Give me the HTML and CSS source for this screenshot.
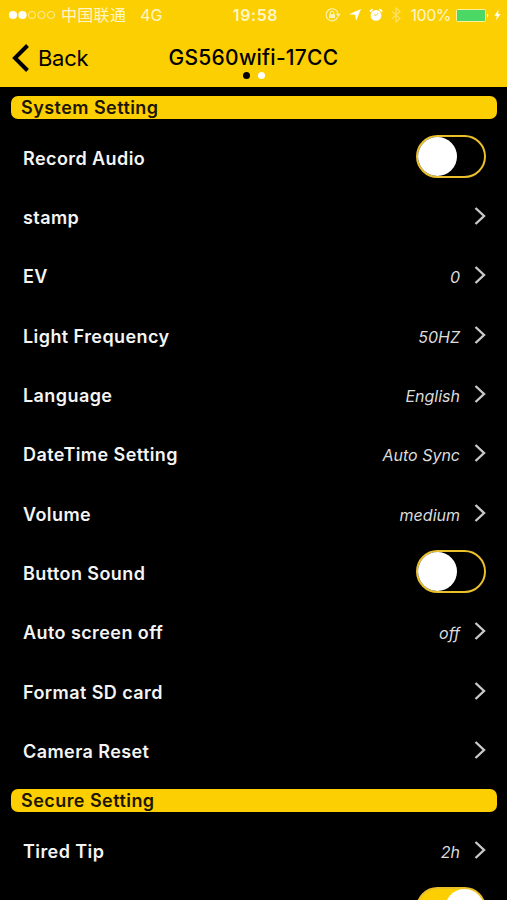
FILE: index.html
```html
<!DOCTYPE html>
<html lang="en">
<head>
    <meta charset="UTF-8">
    <meta name="viewport" content="width=device-width, initial-scale=1.0">
    <title>GS560wifi-17CC</title>
    <link rel="stylesheet" href="styles.css">
</head>
<body>

    <!-- shared icons -->
    <svg class="sprite" aria-hidden="true">
        <symbol id="chevron" viewBox="0 0 12 18">
            <path d="M1.5 1 L10 9 L1.5 17" fill="none" stroke="#c9c9c9" stroke-width="2.4"/>
        </symbol>
    </svg>

    <header class="header">
        <div class="status">
            <div class="status-left">
                <svg class="signal" width="48" height="10" viewBox="0 0 48 10">
                    <circle cx="5" cy="5" r="4.1" fill="#fff"/>
                    <circle cx="14.5" cy="5" r="4.1" fill="#fff"/>
                    <circle cx="24" cy="5" r="3.6" fill="none" stroke="#ffee9c"/>
                    <circle cx="33.5" cy="5" r="3.6" fill="none" stroke="#ffee9c"/>
                    <circle cx="43" cy="5" r="3.6" fill="none" stroke="#ffee9c"/>
                </svg>
                <span class="carrier">中国联通</span>
                <span class="network">4G</span>
            </div>
            <div class="time">19:58</div>
            <div class="status-right">
                <svg class="lock" width="16" height="14" viewBox="0 0 16 14">
                    <path d="M12.7 9 A6 6 0 1 1 13 5.6" fill="none" stroke="#fff3b4" stroke-width="1.2"/>
                    <path d="M10.8 5.8 H15.8 L13.3 9 Z" fill="#fff3b4"/>
                    <rect x="4.2" y="6.2" width="5.8" height="4" fill="#fff3b4"/>
                    <path d="M5.4 6.5 V5 A1.7 1.7 0 0 1 8.8 5 V6.5" fill="none" stroke="#fff3b4" stroke-width="1.1"/>
                </svg>
                <svg class="location" width="12" height="12" viewBox="0 0 12 12">
                    <path d="M12 0 L7 12 L6.2 5.8 L0 5.2 Z" fill="#fff"/>
                </svg>
                <svg class="alarm" width="14" height="14" viewBox="0 0 14 14">
                    <circle cx="7" cy="7.4" r="5.4" fill="#fff"/>
                    <path d="M0.8 3.6 L3.6 1.1 M13.2 3.6 L10.4 1.1" stroke="#fff" stroke-width="1.7"/>
                    <path d="M9.3 5 L7 7.6 L5.2 6.6" fill="none" stroke="#fccf03" stroke-width="1"/>
                </svg>
                <svg class="bluetooth" width="10" height="16" viewBox="0 0 10 16">
                    <path d="M0.8 4.2 L9 11.6 L5 15 V1 L9 4.4 L0.8 11.8" fill="none" stroke="#ffe36c" stroke-width="1.1"/>
                </svg>
                <span class="percent">100%</span>
                <svg class="battery" width="34" height="13" viewBox="0 0 34 13">
                    <rect x="0.5" y="0.5" width="29" height="12" rx="1.2" fill="#4bd864" stroke="#fff0a0"/>
                    <path d="M31 4 Q33.6 6.5 31 9 Z" fill="#fff"/>
                </svg>
                <svg class="bolt" width="7" height="12" viewBox="0 0 8 12">
                    <path d="M5.2 0 L0.4 6.8 H3.3 L2.4 12 L7.6 4.9 H4.7 Z" fill="#fff"/>
                </svg>
            </div>
        </div>
        <div class="navbar">
            <div class="back">
                <svg width="18" height="28" viewBox="0 0 18 28">
                    <path d="M15.5 1.5 L3 14 L15.5 26.5" fill="none" stroke="#000" stroke-width="4"/>
                </svg>
                <span>Back</span>
            </div>
            <div class="title">
                <h1>GS560wifi-17CC</h1>
                <div class="dots">
                    <i class="dot"></i>
                    <i class="dot active"></i>
                </div>
            </div>
        </div>
    </header>

    <main class="settings">
        <h2 class="section">System Setting</h2>
        <div class="row">
            <span class="label">Record Audio</span>
            <span class="switch"></span>
        </div>
        <div class="row">
            <span class="label">stamp</span>
            <svg class="chevron"><use href="#chevron"/></svg>
        </div>
        <div class="row">
            <span class="label">EV</span>
            <span class="value">0</span>
            <svg class="chevron"><use href="#chevron"/></svg>
        </div>
        <div class="row">
            <span class="label">Light Frequency</span>
            <span class="value">50HZ</span>
            <svg class="chevron"><use href="#chevron"/></svg>
        </div>
        <div class="row">
            <span class="label">Language</span>
            <span class="value">English</span>
            <svg class="chevron"><use href="#chevron"/></svg>
        </div>
        <div class="row">
            <span class="label">DateTime Setting</span>
            <span class="value">Auto Sync</span>
            <svg class="chevron"><use href="#chevron"/></svg>
        </div>
        <div class="row">
            <span class="label">Volume</span>
            <span class="value">medium</span>
            <svg class="chevron"><use href="#chevron"/></svg>
        </div>
        <div class="row">
            <span class="label">Button Sound</span>
            <span class="switch"></span>
        </div>
        <div class="row">
            <span class="label">Auto screen off</span>
            <span class="value">off</span>
            <svg class="chevron"><use href="#chevron"/></svg>
        </div>
        <div class="row">
            <span class="label">Format SD card</span>
            <svg class="chevron"><use href="#chevron"/></svg>
        </div>
        <div class="row">
            <span class="label">Camera Reset</span>
            <svg class="chevron"><use href="#chevron"/></svg>
        </div>

        <h2 class="section">Secure Setting</h2>
        <div class="row">
            <span class="label">Tired Tip</span>
            <span class="value">2h</span>
            <svg class="chevron"><use href="#chevron"/></svg>
        </div>
        <div class="row">
            <span class="label"></span>
            <span class="switch on"></span>
        </div>
    </main>

</body>
</html>
```

FILE: styles.css
```css
* {
    box-sizing: border-box;
}

body {
    margin: 0;
    height: 900px;
    overflow: hidden;
    background-color: #000;
    color: #f4f4f4;
    font-family: Inter, "Noto Sans CJK SC", sans-serif;
}

svg {
    display: block;
    flex-shrink: 0;
}

.sprite {
    display: none;
}

.header {
    height: 87px;
    background-color: #fccf03;
    color: #000;
}

/* status bar */
.status {
    display: grid;
    grid-template-columns: 1fr auto 1fr;
    align-items: center;
    height: 30px;
    padding: 0 6px 0 8px;
    color: #fff6c8;
    font-size: 16px;
    line-height: 30px;
}

.status-left,
.status-right {
    display: flex;
    align-items: center;
}

.status-right {
    justify-content: flex-end;
}

.carrier {
    margin-left: 5px;
    letter-spacing: 0.3px;
}

.network {
    margin-left: 14px;
}

.time {
    padding-left: 2px;
    font-weight: 600;
    letter-spacing: 0.6px;
}

.location {
    margin-left: 8px;
}

.alarm {
    margin-left: 8px;
}

.bluetooth {
    margin-left: 8px;
}

.percent {
    margin-left: 10px;
    letter-spacing: -0.5px;
}

.battery {
    margin-left: 5px;
}

.bolt {
    margin-left: 4px;
}

/* navigation */
.navbar {
    display: grid;
    grid-template-columns: 1fr auto 1fr;
    height: 57px;
    padding: 0 12px;
}

.back {
    display: flex;
    align-items: center;
    gap: 8px;
    height: 56px;
    font-size: 22px;
    letter-spacing: -0.3px;
}

.title {
    display: flex;
    flex-direction: column;
    align-items: center;
}

.title h1 {
    margin: 14px 0 0;
    font-size: 21px;
    font-weight: 500;
    letter-spacing: 0.25px;
    line-height: 28px;
}

.dots {
    display: flex;
    gap: 8px;
}

.dot {
    width: 7px;
    height: 7px;
    border-radius: 50%;
    background-color: #000;
}

.dot.active {
    background-color: #fff;
}

/* settings list */
.section {
    height: 23.5px;
    margin: 8.6px 10px 8.6px 11px;
    padding-left: 10px;
    border-radius: 7px;
    background-color: #fccf03;
    color: #1c1600;
    font-size: 18px;
    font-weight: 600;
    letter-spacing: 0.45px;
    line-height: 23.5px;
}

.row {
    display: flex;
    align-items: center;
    height: 59.3px;
    padding: 0 21px 0 23px;
}

.label {
    flex: 1;
    padding-top: 2px;
    font-size: 18px;
    font-weight: 600;
    letter-spacing: 0.42px;
}

.value {
    margin-right: 14px;
    padding-top: 3px;
    color: #dcdcdc;
    font-size: 16px;
    font-style: italic;
}

.chevron {
    width: 12px;
    height: 18px;
    margin-bottom: 1px;
}

.switch {
    width: 70px;
    height: 43px;
    margin-bottom: 2px;
    border: 2px solid #e9c02b;
    border-radius: 22px;
}

.switch::before {
    content: "";
    display: block;
    width: 39px;
    height: 39px;
    border-radius: 50%;
    background-color: #fff;
}

.switch.on {
    background-color: #fccf03;
}

.switch.on::before {
    margin-left: auto;
}
```
